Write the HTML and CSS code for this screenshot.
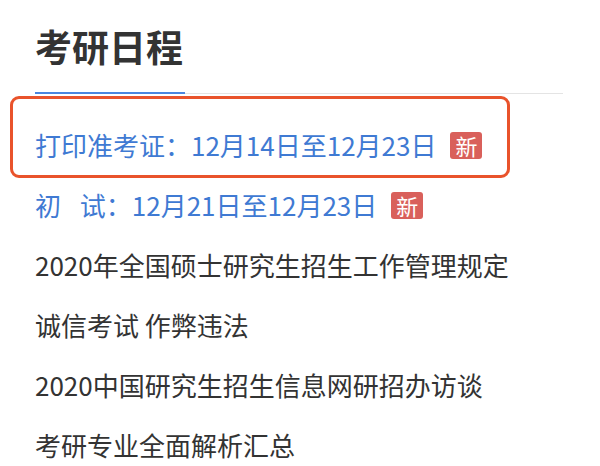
FILE: index.html
```html
<!DOCTYPE html>
<html lang="zh-CN">
<head>
<meta charset="utf-8">
<title>考研日程</title>
<link rel="stylesheet" href="styles.css">
</head>
<body>
<div class="panel">
  <div class="tabs">
    <h2 class="tab active">考研日程</h2>
  </div>
  <ul class="list">
    <li class="item hl"><span class="date">打印准考证：12月14日至12月23日</span><span class="badge">新</span><span class="mark"></span></li>
    <li class="item"><span class="date">初&ensp;&nbsp;试：12月21日至12月23日</span><span class="badge">新</span></li>
    <li class="item">2020年全国硕士研究生招生工作管理规定</li>
    <li class="item">诚信考试 作弊违法</li>
    <li class="item">2020中国研究生招生信息网研招办访谈</li>
    <li class="item">考研专业全面解析汇总</li>
  </ul>
</div>
</body>
</html>
```

FILE: styles.css
```css
html, body {
  margin: 0;
  padding: 0;
  background: #ffffff;
}
body {
  font-family: "Noto Sans CJK SC", "Noto Sans", sans-serif;
  color: #333333;
}
.panel {
  padding-left: 35px;
  width: 528px;
}
.tabs {
  display: flex;
  border-bottom: 1px solid #e4e4e4;
  height: 93px;
}
.tab {
  margin: 0;
  font-size: 37px;
  font-weight: 700;
  line-height: 40px;
  padding-top: 26px;
  color: #333333;
  white-space: nowrap;
}
.tab.active {
  width: 150px;
  height: 66px;
  border-bottom: 2px solid #4a86df;
}
.list {
  list-style: none;
  margin: 21px 0 0;
  padding: 0;
}
.item {
  font-size: 26px;
  line-height: 60px;
  height: 60px;
  white-space: nowrap;
  color: #333333;
}
.hl {
  position: relative;
}
.date {
  color: #3f7ad3;
}
.badge {
  display: inline-block;
  vertical-align: middle;
  margin-left: 14px;
  width: 32px;
  height: 27px;
  line-height: 27px;
  text-align: center;
  font-size: 22px;
  color: #ffffff;
  background: #d9605b;
  border-radius: 3px;
  position: relative;
  top: -3px;
}
.mark {
  position: absolute;
  left: -25px;
  top: -19px;
  width: 494px;
  height: 76px;
  border: 3px solid #e9532b;
  border-radius: 9px;
}
```
